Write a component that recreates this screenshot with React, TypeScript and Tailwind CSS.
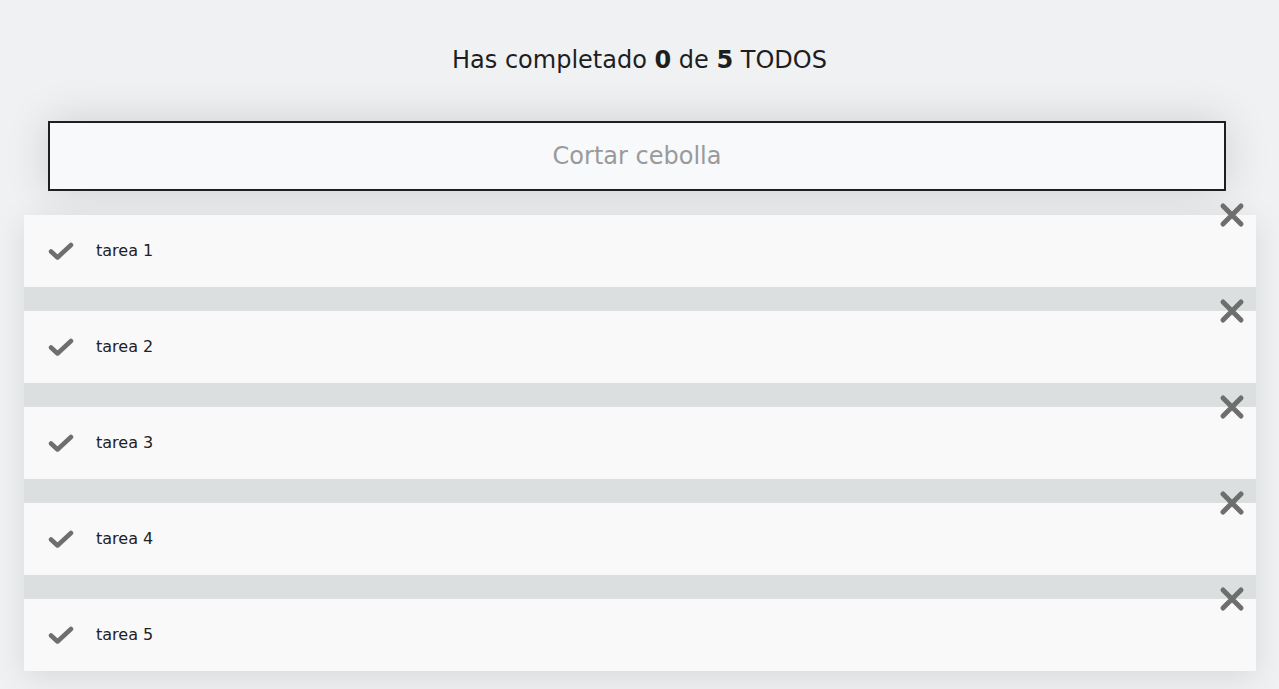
import React from 'react'

const todos = ['tarea 1', 'tarea 2', 'tarea 3', 'tarea 4', 'tarea 5']

function CheckIcon() {
  return (
    <svg width="26" height="18" viewBox="0 0 26 18" className="shrink-0">
      <path d="M3 9.5 L9.5 15.5 L23 3" fill="none" stroke="#6e6e6e" strokeWidth="4.5" strokeLinecap="round" strokeLinejoin="round" />
    </svg>
  )
}

function CloseIcon() {
  return (
    <svg width="26" height="26" viewBox="0 0 26 26">
      <path d="M4 4 L22 22 M22 4 L4 22" fill="none" stroke="#6e6e6e" strokeWidth="5" strokeLinecap="round" />
    </svg>
  )
}

export default function App() {
  return (
    <div
      className="min-h-screen bg-[#f0f1f3] text-[#1e1e1e]"
      style={{ fontFamily: '"DejaVu Sans", "Open Sans", sans-serif' }}
    >
      <h1 className="pt-[45px] text-center text-[24px] leading-[30px]">
        Has completado <b>0</b> de <b>5</b> TODOS
      </h1>

      <div className="pl-[48px] pt-[46px]">
        <input
          className="h-[70px] w-[1178px] border-2 border-[#1f1f1f] bg-[#f8f9fb] text-center text-[24px] text-[#555] outline-none placeholder:text-[#9a9a9a] shadow-[0_0_45px_rgba(0,0,0,0.14)]"
          placeholder="Cortar cebolla"
        />
      </div>

      <ul className="mx-[24px] mt-[24px] flex w-[1232px] flex-col gap-[24px] bg-[#dcdfe0] shadow-[0_6px_30px_rgba(0,0,0,0.1)]">
        {todos.map((t) => (
          <li key={t} className="relative flex h-[72px] items-center gap-[22px] bg-[#f9f9f9] pl-[24px]">
            <CheckIcon />
            <span className="text-[16px] text-[#222]">{t}</span>
            <button className="absolute right-[11px] top-[-13px]">
              <CloseIcon />
            </button>
          </li>
        ))}
      </ul>
    </div>
  )
}
